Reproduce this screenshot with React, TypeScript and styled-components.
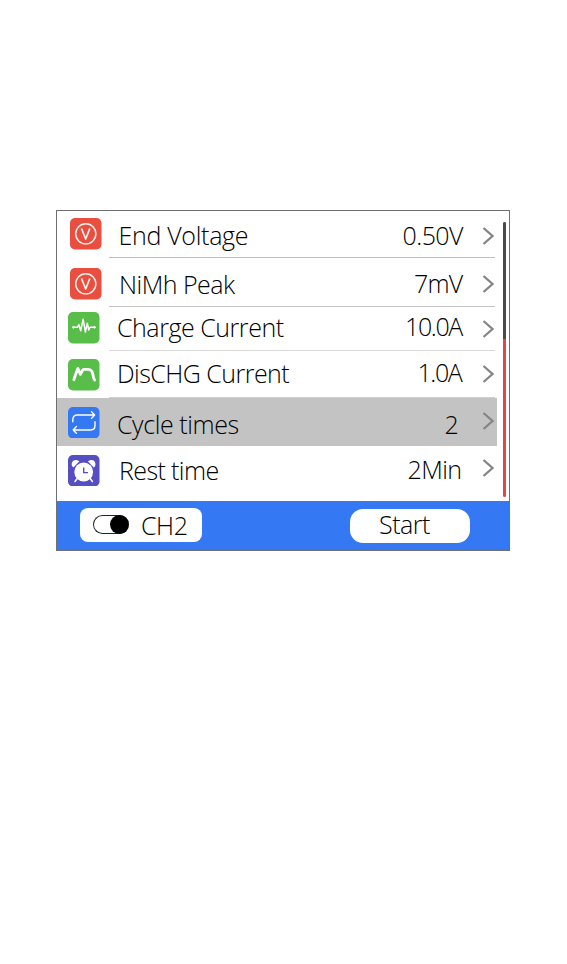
import React from 'react';
import styled, { createGlobalStyle } from 'styled-components';

const GlobalStyle = createGlobalStyle`
  html, body { margin: 0; background: #fff; }
  *, *::before, *::after { box-sizing: border-box; }
`;

const Page = styled.main`
  min-height: 964px;
  padding: 210px 57px 0 56px;
  background: #fff;
  color: #000;
  font-family: 'Open Sans', 'Liberation Sans', sans-serif;
  font-weight: 300;
  font-size: 25px;
  line-height: 30px;
`;

const Device = styled.section`
  width: 454px;
  height: 341px;
  border: 1px solid #6f6f72;
  display: flex;
  flex-direction: column;
`;

const Body = styled.div`
  display: flex;
  height: 290px;
`;

const List = styled.ul`
  width: 440px;
  margin: 0;
  padding: 0;
  list-style: none;
`;

const Row = styled.li<{ $height: number; $selected?: boolean }>`
  display: flex;
  height: ${(p) => p.$height}px;
  background: ${(p) => (p.$selected ? '#c3c3c3' : 'transparent')};
`;

const IconCell = styled.div<{ $left: number; $top: number }>`
  width: 51.5px;
  flex: none;
  padding: ${(p) => p.$top}px 0 0 ${(p) => p.$left}px;
  line-height: 0;
`;

const Tile = styled.svg`
  width: 31.5px;
  height: 31.5px;
  display: block;
`;

const Details = styled.div<{ $line: string }>`
  display: flex;
  align-items: flex-start;
  width: 386.5px;
  border-bottom: 1px solid ${(p) => p.$line};
`;

const Label = styled.span<{ $x: number; $y: number; $track: number }>`
  width: 291.5px;
  flex: none;
  white-space: nowrap;
  padding: ${(p) => p.$y}px 0 0 ${(p) => 8 + p.$x}px;
  letter-spacing: ${(p) => p.$track}px;
`;

const Value = styled(Label)`
  width: 83px;
  padding-left: ${(p) => p.$x}px;
`;

const Chevron = styled.svg<{ $y: number }>`
  width: 11px;
  height: 18px;
  flex: none;
  margin-top: ${(p) => p.$y}px;
  fill: none;
  stroke: #858585;
  stroke-width: 2.2;
`;

const ScrollTrack = styled.div`
  width: 3px;
  height: 275px;
  margin: 11px 0 0 6px;
  border-radius: 2px;
  overflow: hidden;
  background: #e24646;
`;

const ScrollThumb = styled.div`
  height: 117px;
  background: #4b4b4b;
`;

const Footer = styled.footer`
  height: 49px;
  display: flex;
  justify-content: space-between;
  padding: 7px 39px 0 23px;
  background: #3478f3;
`;

const FooterButton = styled.button`
  border: 0;
  background: #fff;
  color: #000;
  font: inherit;
  display: flex;
  text-align: left;
`;

const ChannelButton = styled(FooterButton)`
  width: 122px;
  height: 34px;
  padding: 2px 0 0 13px;
  border-radius: 8px;
  letter-spacing: -0.4px;
  gap: 12px;
`;

const StartButton = styled(FooterButton)`
  width: 120px;
  height: 34px;
  padding: 0 0 0 29px;
  margin-top: 0.5px;
  border-radius: 13px;
  letter-spacing: -0.5px;
`;

const Switch = styled.span`
  display: flex;
  justify-content: flex-end;
  width: 36px;
  height: 19px;
  margin-top: 5px;
  border: 1px solid #222;
  border-right: 0;
  border-radius: 10px;
`;

const Knob = styled.span`
  width: 19px;
  height: 19px;
  margin-top: -1px;
  flex: none;
  border-radius: 50%;
  background: #000;
`;

type IconName = 'voltage' | 'charge' | 'discharge' | 'cycle' | 'alarm';

const tileColor: Record<IconName, string> = {
  voltage: '#e94f3f',
  charge: '#58bd49',
  discharge: '#58bd49',
  cycle: '#3478f3',
  alarm: '#564fc4',
};

const glyphs: Record<IconName, React.ReactNode> = {
  voltage: (
    <g fill="none" stroke="#fff" strokeOpacity=".92" strokeLinejoin="round">
      <circle cx="15.8" cy="15.8" r="10.1" strokeWidth="1.4" />
      <path d="M11.5 10.5L15.7 21L19.8 10.5" strokeWidth="1.7" />
    </g>
  ),
  charge: (
    <g fill="none" stroke="#fff" strokeLinejoin="round" strokeLinecap="round">
      <path d="M5.3 15.3H9.4L10.9 12.6L12.7 18.8L15.1 7.2L17.4 20L19.3 11.2L20.8 18L22 15.3H26" strokeWidth="1.5" />
      <circle cx="5.4" cy="15.3" r=".9" fill="#fff" />
      <circle cx="26.5" cy="15.3" r=".9" fill="#fff" />
    </g>
  ),
  discharge: (
    <path
      d="M5.8 20.8L9.8 9.4L12.4 15.4L14.6 11.2Q15.2 10.4 16.4 10.4H20C23.6 10.4 24.6 12.8 25 16Q25.3 19.2 26.6 21"
      fill="none"
      stroke="#fff"
      strokeWidth="2.8"
      strokeLinecap="round"
      strokeLinejoin="round"
    />
  ),
  cycle: (
    <g fill="none" stroke="#fff" strokeWidth="1.4" strokeLinecap="round" strokeLinejoin="round">
      <path d="M4.8 14.8V12.5Q4.8 8 9.3 8H26.3M23.5 4.7L26.6 8L23.5 11.4" />
      <path d="M27 14.7V18.5Q27 23 22.5 23H5.2M8.4 19.6L5.2 23L8.4 26.3" />
    </g>
  ),
  alarm: (
    <g>
      <path
        d="M4.4 11.6C2.4 8.4 4.8 4.4 8.6 5L11.4 6.2L5.4 12.6ZM26.8 11.6C28.8 8.4 26.4 4.4 22.6 5L19.8 6.2L25.8 12.6Z"
        fill="#fff"
      />
      <path d="M9.4 23.3L7 26.4M22 23.3L24.4 26.4" stroke="#fff" strokeWidth="1.6" strokeLinecap="round" />
      <circle cx="15.7" cy="17" r="9.4" fill="#fff" />
      <path d="M15.7 12.5V17.6H20" fill="none" stroke="#564fc4" strokeWidth="1.4" />
    </g>
  ),
};

interface Setting {
  icon: IconName;
  iconAt: [number, number];
  height: number;
  line: string;
  label: string;
  labelAt: [number, number, number];
  value: string;
  valueAt: [number, number, number];
  chevronY: number;
  selected?: boolean;
}

const settings: Setting[] = [
  { icon: 'voltage', iconAt: [13, 7], height: 47, line: '#bebebe', label: 'End Voltage', labelAt: [2, 9, -0.3], value: '0.50V', valueAt: [2.5, 9, -0.55], chevronY: 16 },
  { icon: 'voltage', iconAt: [13, 10], height: 49, line: '#c4c4c4', label: 'NiMh Peak', labelAt: [2.5, 11, -0.52], value: '7mV', valueAt: [14, 10, -0.8], chevronY: 17 },
  { icon: 'charge', iconAt: [11, 5], height: 44, line: '#d9d9d9', label: 'Charge Current', labelAt: [0.5, 5, -0.46], value: '10.0A', valueAt: [5, 4, -1.35], chevronY: 12.5 },
  { icon: 'discharge', iconAt: [11, 8], height: 47, line: '#d0d0d0', label: 'DisCHG Current', labelAt: [0.5, 7, -0.53], value: '1.0A', valueAt: [17.5, 6, -1.4], chevronY: 13.5 },
  { icon: 'cycle', iconAt: [11, 8.5], height: 48, line: 'transparent', label: 'Cycle times', labelAt: [0.5, 10.5, -0.4], value: '2', valueAt: [44.5, 10.5, 0], chevronY: 13.5, selected: true },
  { icon: 'alarm', iconAt: [11, 8.5], height: 55, line: 'transparent', label: 'Rest time', labelAt: [2.5, 9, -0.6], value: '2Min', valueAt: [7.5, 7.5, -0.6], chevronY: 13 },
];

export default function App() {
  return (
    <>
      <GlobalStyle />
      <Page>
        <Device>
          <Body>
            <List>
              {settings.map((s) => (
                <Row key={s.label} $height={s.height} $selected={s.selected}>
                  <IconCell $left={s.iconAt[0]} $top={s.iconAt[1]}>
                    <Tile viewBox="0 0 31.5 31.5">
                      <rect width="31.5" height="31.5" rx="5" fill={tileColor[s.icon]} />
                      {glyphs[s.icon]}
                    </Tile>
                  </IconCell>
                  <Details $line={s.line}>
                    <Label $x={s.labelAt[0]} $y={s.labelAt[1]} $track={s.labelAt[2]}>{s.label}</Label>
                    <Value $x={s.valueAt[0]} $y={s.valueAt[1]} $track={s.valueAt[2]}>{s.value}</Value>
                    <Chevron $y={s.chevronY} viewBox="0 0 11 18">
                      <path d="M0.5 1L9.5 9L0.5 17" />
                    </Chevron>
                  </Details>
                </Row>
              ))}
            </List>
            <ScrollTrack>
              <ScrollThumb />
            </ScrollTrack>
          </Body>
          <Footer>
            <ChannelButton>
              <Switch><Knob /></Switch>
              CH2
            </ChannelButton>
            <StartButton>Start</StartButton>
          </Footer>
        </Device>
      </Page>
    </>
  );
}
